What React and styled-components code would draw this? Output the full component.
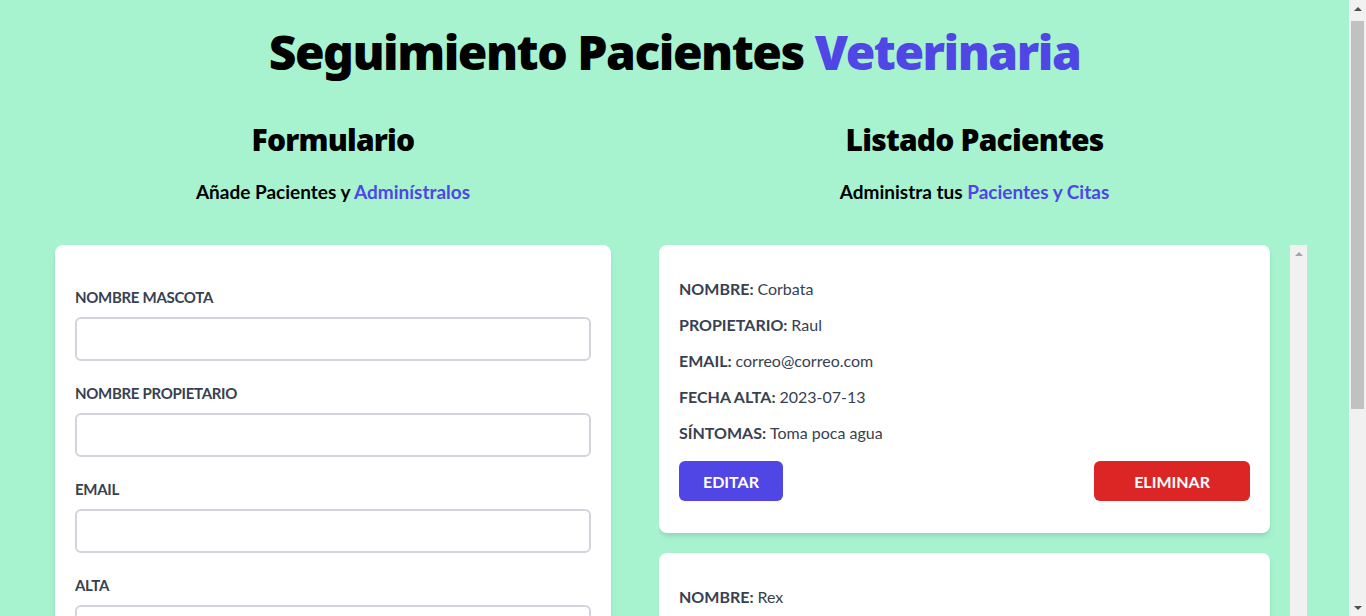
import styled, { createGlobalStyle } from 'styled-components';

const GlobalStyle = createGlobalStyle`
  html {
    background: #a7f3d0;
  }
  body {
    margin: 0;
    background: #a7f3d0;
    font-family: Lato, "Noto Sans", sans-serif;
    color: #000;
  }
  * {
    box-sizing: border-box;
  }
`;

const Page = styled.div`
  padding: 28px 17px 60px 0;
`;

const Title = styled.h1`
  margin: 0 auto;
  font-family: "Noto Sans", Lato, sans-serif;
  font-size: 48px;
  line-height: 1;
  font-weight: 900;
  letter-spacing: -1.5px;
  text-align: center;
`;

const Accent = styled.span`
  color: #4f46e5;
`;

const Columns = styled.div`
  display: flex;
  align-items: flex-start;
  margin: 46px 0 0 55px;
  gap: 48px;
`;

const Column = styled.section`
  width: ${(p) => p.$width}px;
  flex-shrink: 0;
`;

const ColumnHead = styled.div`
  padding-right: ${(p) => p.$offset || 0}px;
  text-align: center;
  margin-bottom: 39px;
`;

const Heading = styled.h2`
  margin: 0;
  font-family: "Noto Sans", Lato, sans-serif;
  font-size: 30px;
  line-height: 36px;
  font-weight: 900;
  letter-spacing: -0.8px;
`;

const Subheading = styled.p`
  margin: 20px 0 0;
  font-size: 19px;
  line-height: 28px;
  font-weight: 700;
`;

const Card = styled.div`
  background: #fff;
  border-radius: 8px;
  box-shadow: 0 4px 6px -1px rgba(0, 0, 0, 0.1), 0 2px 4px -1px rgba(0, 0, 0, 0.06);
  padding: ${(p) => (p.$tight ? '32px 20px' : '40px 20px')};
  margin: 0 ${(p) => (p.$tight ? 20 : 0)}px 20px 0;
`;

const Field = styled.div`
  margin-bottom: 20px;
`;

const Label = styled.label`
  display: block;
  font-size: 15px;
  line-height: 24px;
  font-weight: 700;
  letter-spacing: -0.3px;
  text-transform: uppercase;
  color: #374151;
`;

const Input = styled.input`
  display: block;
  width: 100%;
  height: 44px;
  margin-top: 8px;
  padding: 8px;
  border: 2px solid #d1d5db;
  border-radius: 6px;
  font: inherit;
  background: #fff;
`;

const TextArea = styled.textarea`
  display: block;
  width: 100%;
  height: 66px;
  margin-top: 8px;
  padding: 8px;
  border: 2px solid #d1d5db;
  border-radius: 6px;
  font: inherit;
  resize: vertical;
`;

const Submit = styled.button`
  width: 100%;
  padding: 12px;
  border: 0;
  background: #4f46e5;
  color: #fff;
  font: inherit;
  font-weight: 700;
  text-transform: uppercase;
`;

const ScrollBox = styled.div`
  display: flex;
  height: 100vh;
`;

const CardList = styled.div`
  flex: 1;
  overflow-y: auto;
  scrollbar-width: none;
`;

/* scrollbar rails, drawn since the headless page hides the real ones */
const Rail = styled.div`
  display: flex;
  flex-direction: column;
  align-items: center;
  justify-content: space-between;
  width: 17px;
  flex-shrink: 0;
  background: #f1f1f1;
`;

const PageRail = styled(Rail)`
  position: fixed;
  top: 0;
  right: 0;
  height: 100vh;
`;

const ArrowBox = styled.div`
  display: flex;
  align-items: center;
  justify-content: center;
  width: 17px;
  height: 17px;
  flex-shrink: 0;
`;

const Arrow = styled.span`
  width: 0;
  height: 0;
  border-left: 4px solid transparent;
  border-right: 4px solid transparent;
  ${(p) => (p.$down ? 'border-top' : 'border-bottom')}: 4px solid ${(p) => p.$color};
`;

const Thumb = styled.div`
  width: 13px;
  height: ${(p) => p.$size}px;
  margin-top: 4px;
  background: #c1c1c1;
`;

const Spacer = styled.div`
  flex: 1;
`;

const Line = styled.p`
  margin: 0 0 12px;
  font-size: 16px;
  line-height: 24px;
  font-weight: 700;
  text-transform: uppercase;
  color: #374151;
`;

const Value = styled.span`
  font-weight: 400;
  text-transform: none;
`;

const Actions = styled.div`
  display: flex;
  justify-content: space-between;
  margin-top: 16px;
`;

const Button = styled.button`
  height: 40px;
  padding: 0 ${(p) => p.$pad}px;
  border: 0;
  border-radius: 6px;
  background: ${(p) => p.$bg};
  color: #fff;
  font: inherit;
  font-size: 16px;
  font-weight: 700;
  text-transform: uppercase;
  cursor: pointer;
`;

const pacientes = [
  {
    id: 1,
    nombre: 'Corbata',
    propietario: 'Raul',
    email: 'correo@correo.com',
    alta: '2023-07-13',
    sintomas: 'Toma poca agua',
  },
  {
    id: 2,
    nombre: 'Rex',
    propietario: 'Juan',
    email: 'juan@correo.com',
    alta: '2023-07-14',
    sintomas: 'No come',
  },
];

function Formulario() {
  return (
    <Column $width={556}>
      <ColumnHead>
        <Heading>Formulario</Heading>
        <Subheading>
          Añade Pacientes y <Accent>Adminístralos</Accent>
        </Subheading>
      </ColumnHead>
      <Card as="form" onSubmit={(e) => e.preventDefault()}>
        <Field>
          <Label htmlFor="mascota">Nombre Mascota</Label>
          <Input id="mascota" type="text" />
        </Field>
        <Field>
          <Label htmlFor="propietario">Nombre Propietario</Label>
          <Input id="propietario" type="text" />
        </Field>
        <Field>
          <Label htmlFor="email">Email</Label>
          <Input id="email" type="email" />
        </Field>
        <Field>
          <Label htmlFor="alta">Alta</Label>
          <Input id="alta" type="date" />
        </Field>
        <Field>
          <Label htmlFor="sintomas">Síntomas</Label>
          <TextArea id="sintomas" />
        </Field>
        <Submit type="submit">Agregar Paciente</Submit>
      </Card>
    </Column>
  );
}

function Paciente({ paciente }) {
  return (
    <Card $tight>
      <Line>
        Nombre: <Value>{paciente.nombre}</Value>
      </Line>
      <Line>
        Propietario: <Value>{paciente.propietario}</Value>
      </Line>
      <Line>
        Email: <Value>{paciente.email}</Value>
      </Line>
      <Line>
        Fecha Alta: <Value>{paciente.alta}</Value>
      </Line>
      <Line>
        Síntomas: <Value>{paciente.sintomas}</Value>
      </Line>
      <Actions>
        <Button $bg="#4f46e5" $pad={24}>
          Editar
        </Button>
        <Button $bg="#dc2626" $pad={40}>
          Eliminar
        </Button>
      </Actions>
    </Card>
  );
}

function ListadoPacientes() {
  return (
    <Column $width={648}>
      <ColumnHead $offset={17}>
        <Heading>Listado Pacientes</Heading>
        <Subheading>
          Administra tus <Accent>Pacientes y Citas</Accent>
        </Subheading>
      </ColumnHead>
      <ScrollBox>
        <CardList>
          {pacientes.map((p) => (
            <Paciente key={p.id} paciente={p} />
          ))}
        </CardList>
        <Rail>
          <ArrowBox>
            <Arrow $color="#a3a3a3" />
          </ArrowBox>
          <ArrowBox>
            <Arrow $down $color="#a3a3a3" />
          </ArrowBox>
        </Rail>
      </ScrollBox>
    </Column>
  );
}

export default function App() {
  return (
    <>
      <GlobalStyle />
      <Page>
        <Title>
          Seguimiento Pacientes <Accent>Veterinaria</Accent>
        </Title>
        <Columns>
          <Formulario />
          <ListadoPacientes />
        </Columns>
      </Page>
      <PageRail>
        <ArrowBox>
          <Arrow $color="#505050" />
        </ArrowBox>
        <Thumb $size={388} />
        <Spacer />
        <ArrowBox>
          <Arrow $down $color="#505050" />
        </ArrowBox>
      </PageRail>
    </>
  );
}
